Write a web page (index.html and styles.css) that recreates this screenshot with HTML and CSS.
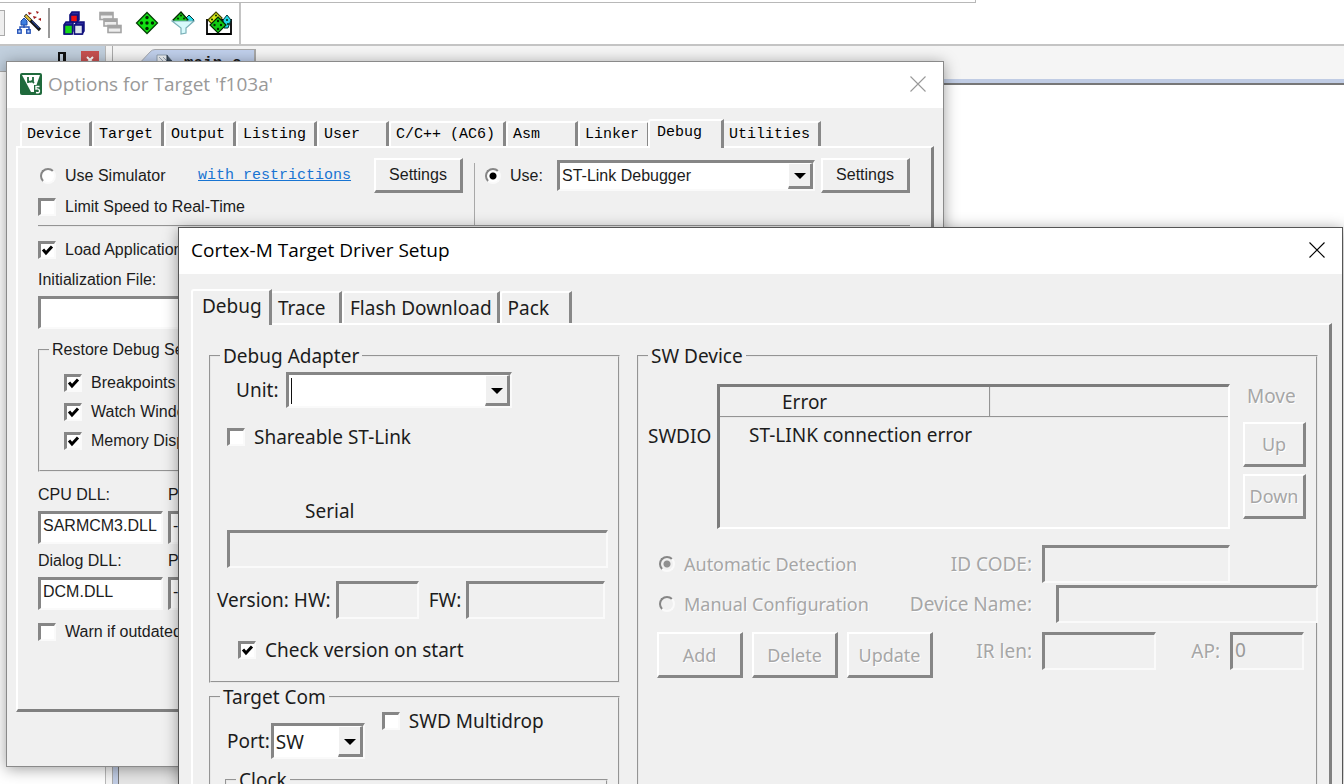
FILE: index.html
```html
<!DOCTYPE html>
<html lang="en">
<head>
<meta charset="utf-8">
<title>Options for Target 'f103a'</title>
<link rel="stylesheet" href="styles.css">
</head>
<body>
<div class="app">
  <div class="menu-edge"></div>
  <div class="toolbar">
    <button class="tool-stub" aria-label="Target list"></button>
    <button class="tool wand" aria-label="Options for target">
      <svg width="26" height="26" viewBox="0 0 26 26">
        <path d="M8 14v4M4 20v-3h9v3" fill="none" stroke="#2a56b8" stroke-width="1.5"/>
        <path d="M8 8l3 3v4H5v-4z" fill="#3f7fe0" stroke="#1c4aa8"/>
        <g fill="#bcd6ff" stroke="#2a56b8" stroke-width="1.4"><rect x="1.7" y="19.700" width="3.500" height="3.500"/><rect x="10.700" y="19.700" width="3.500" height="3.500"/></g>
        <path d="M9 5l15 15" stroke="#111" stroke-width="3.200"/><path d="M9.500 5.500l5 5" stroke="#e8c83c" stroke-width="2"/>
        <path d="M16 11l7 7" stroke="#26408c" stroke-width="1.200"/>
        <g fill="#a01818"><path d="M12 2l4 1-3 2zM20 1l3 1-2 2zM17 6l4 1-3 2zM22 9l3-1v3z"/></g>
      </svg>
    </button>
    <span class="tool-sep"></span>
    <button class="tool" aria-label="Manage project items">
      <svg width="24" height="24" viewBox="0 0 24 24" stroke="#10107c" stroke-width="1.500">
        <path d="M7 4l2-3h7v8l-2 2H7z" fill="#2a2aa0"/><rect x="7.500" y="4" width="7" height="7" fill="#f01010"/>
        <path d="M1 14l2-3h7v9l-2 3H1z" fill="#2a2aa0"/><rect x="1.500" y="14" width="8" height="9" fill="#18d818"/>
        <path d="M12 14l2-3h7v9l-2 3h-7z" fill="#2a2aa0"/><rect x="11.500" y="14" width="8" height="9" fill="#dfe6ee"/>
      </svg>
    </button>
    <button class="tool" aria-label="Multi-project workspace">
      <svg width="24" height="24" viewBox="0 0 24 24" fill="#eee" stroke="#a4a4a4" stroke-width="1.600">
        <rect x="1" y="1.500" width="13" height="7"/><path d="M1 3h13" stroke-width="3"/>
        <rect x="5" y="8" width="13" height="7"/><path d="M5 9.500h13" stroke-width="3"/>
        <rect x="9" y="14.500" width="13" height="7"/><path d="M9 16h13" stroke-width="3"/>
      </svg>
    </button>
    <button class="tool" aria-label="Manage run-time environment">
      <svg width="24" height="24" viewBox="0 0 24 24">
        <path d="M12 1.500L22.500 12 12 22.500 1.500 12z" fill="#12e012" stroke="#064006" stroke-width="1.300"/>
        <g fill="#022802"><circle cx="12" cy="6.500" r="1.700"/><circle cx="6.500" cy="12" r="1.700"/><circle cx="12" cy="12" r="1.700"/><circle cx="17.500" cy="12" r="1.700"/><circle cx="12" cy="17.500" r="1.700"/></g>
      </svg>
    </button>
    <button class="tool" aria-label="Select software packs">
      <svg width="24" height="24" viewBox="0 0 24 24">
        <path d="M14 8l4-4 5 5-5 4z" fill="#28dce8" stroke="#033" stroke-width="1"/>
        <path d="M2 9l8-8 7 8-5 4H7z" fill="#16c816" stroke="#032803" stroke-width="1.200"/>
        <g fill="#022802"><circle cx="10" cy="4.500" r="1"/><circle cx="7" cy="7.500" r="1"/><circle cx="13" cy="7.500" r="1"/></g>
        <path d="M1 10h22l-8 7v5l-5 1v-6z" fill="#d8fafc" stroke="#7ab0b8" stroke-width="1.200"/>
      </svg>
    </button>
    <button class="tool" aria-label="Pack installer">
      <svg width="26" height="24" viewBox="0 0 26 24">
        <path d="M1 9h24v14H1z" fill="#fff" stroke="#000" stroke-width="1.800"/>
        <path d="M17 9l4-5 4 5-3 8h-4z" fill="#24d8e8" stroke="#033" stroke-width="1"/>
        <path d="M2 9l8-8 6 6-8 8z" fill="#d8e818" stroke="#440" stroke-width="1.200"/>
        <path d="M12 6l8 8-8 8-8-8z" fill="#12cc12" stroke="#032803" stroke-width="1.200"/>
        <g fill="#022802"><circle cx="12" cy="10" r="1.200"/><circle cx="8.500" cy="14" r="1.200"/><circle cx="15" cy="14" r="1.200"/><circle cx="12" cy="18" r="1.200"/><circle cx="10" cy="4.500" r="1"/><circle cx="6" cy="8.500" r="1"/><circle cx="21" cy="9" r="1"/><circle cx="22" cy="13" r="1"/></g>
      </svg>
    </button>
  </div>
  <div class="workspace">
    <div class="sidebar">
      <div class="sidebar-head">
        <svg width="12" height="18" viewBox="0 0 12 18"><path d="M3 12V2h6v10M0 12h12M6 12v6" fill="none" stroke="#111" stroke-width="2"/><path d="M8 2v10" stroke="#111" stroke-width="2"/></svg>
        <button class="panel-close" aria-label="Close panel"><svg width="8" height="8" viewBox="0 0 8 8"><path d="M1 1l6 6M7 1L1 7" stroke="#fff" stroke-width="2"/></svg></button>
      </div>
      <div class="sidebar-body"></div>
    </div>
    <div class="editor">
      <div class="editor-tabs">
        <div class="file-tab">
          <svg class="tab-slope" width="18" height="30" viewBox="0 0 18 30"><path d="M0 17L13 3q2-2.500 5-2.500V30H0z" fill="#c0d0ec"/><path d="M0 17H0V0h13z" fill="#f5f5f5"/><path d="M0 17L13 3q2-2.500 5-2.500" fill="none" stroke="#a4a8b0"/></svg>
          <span class="tab-body"><svg width="18" height="24" viewBox="0 0 18 24"><path d="M1 1h10l5 6v16H1z" fill="#eef2f6" stroke="#90a0b0"/><path d="M3 3l8 8M3 7l8 8M7 3l6 6" stroke="#9ab" stroke-width="1"/><path d="M11 1v6h5" fill="#456" stroke="#234"/></svg>main.c</span>
        </div>
      </div>
      <div class="editor-body"><div class="gutter"></div></div>
    </div>
  </div>

  <section class="dialog options" aria-label="Options for Target 'f103a'">
    <header class="titlebar inactive">
      <svg width="22" height="22" viewBox="0 0 22 22"><rect width="22" height="22" rx="2" fill="#1f6a3c"/><path d="M2 2h18l-6 17h-3z" fill="#fff"/><path d="M8 4v6M8 8q3 2 5-1M13 4v5l1 1" fill="none" stroke="#1f6a3c" stroke-width="1.800"/><path d="M14 12h7v9h-7z" fill="#1f6a3c"/><path d="M19.500 13.500H16v2.500q3.500-.5 3.500 2T16 19.500" fill="none" stroke="#fff" stroke-width="1.400"/></svg>
      <h1>Options for Target 'f103a'</h1>
      <button class="close" aria-label="Close"><svg width="16" height="16" viewBox="0 0 16 16"><path d="M.5.5l15 15M15.500.5l-15 15" stroke="currentColor" stroke-width="1.100"/></svg></button>
    </header>
    <div class="tabs mono" role="tablist">
      <button role="tab">Device</button><button role="tab">Target</button><button role="tab">Output</button><button role="tab">Listing</button><button role="tab">User</button><button role="tab">C/C++ (AC6)</button><button role="tab">Asm</button><button role="tab">Linker</button><button role="tab" class="active" aria-selected="true">Debug</button><button role="tab">Utilities</button>
    </div>
    <div class="page">
      <div class="drivers">
        <div class="driver-left">
          <div class="row">
            <label class="opt"><input type="radio" name="driver">Use Simulator</label>
            <a class="mono" href="#restrictions">with restrictions</a>
            <button class="btn settings">Settings</button>
          </div>
          <label class="opt"><input type="checkbox">Limit Speed to Real-Time</label>
        </div>
        <div class="driver-right">
          <div class="row">
            <label class="opt"><input type="radio" name="driver" checked>Use:</label>
            <span class="combo"><select aria-label="Debugger"><option>ST-Link Debugger</option></select><i></i></span>
            <button class="btn settings">Settings</button>
          </div>
        </div>
      </div>
      <div class="startup">
        <label class="opt"><input type="checkbox" checked>Load Application</label>
        <label class="caption" for="init">Initialization File:</label>
        <input class="field" id="init" type="text">
        <fieldset>
          <legend>Restore Debug Session</legend>
          <div class="restore">
            <label class="opt"><input type="checkbox" checked>Breakpoints</label>
            <label class="opt"><input type="checkbox" checked>Watch Windows</label>
            <label class="opt"><input type="checkbox" checked>Memory Display</label>
          </div>
        </fieldset>
        <div class="dlls">
          <div><label class="caption" for="cpu">CPU DLL:</label><input class="field" id="cpu" type="text" value="SARMCM3.DLL"></div>
          <div><label class="caption" for="cpup">Parameter:</label><input class="field" id="cpup" type="text" value="-REMAP"></div>
          <div><label class="caption" for="dlg">Dialog DLL:</label><input class="field" id="dlg" type="text" value="DCM.DLL"></div>
          <div><label class="caption" for="dlgp">Parameter:</label><input class="field" id="dlgp" type="text" value="-pCM3"></div>
        </div>
        <label class="opt warn"><input type="checkbox">Warn if outdated</label>
      </div>
    </div>
  </section>

  <section class="dialog driver" aria-label="Cortex-M Target Driver Setup">
    <header class="titlebar">
      <h1>Cortex-M Target Driver Setup</h1>
      <button class="close" aria-label="Close"><svg width="16" height="16" viewBox="0 0 16 16"><path d="M.5.5l15 15M15.500.5l-15 15" stroke="currentColor" stroke-width="1.100"/></svg></button>
    </header>
    <div class="tabs" role="tablist">
      <button role="tab" class="active" aria-selected="true">Debug</button><button role="tab">Trace</button><button role="tab">Flash Download</button><button role="tab">Pack</button>
    </div>
    <div class="page">
      <div class="left">
        <fieldset class="adapter">
          <legend>Debug Adapter</legend>
          <div class="row unit"><label for="unit">Unit:</label><span class="combo"><input id="unit" type="text" class="caret" role="combobox" aria-expanded="false"><i></i></span></div>
          <label class="opt share"><input type="checkbox">Shareable ST-Link</label>
          <label class="serial" for="serial">Serial</label>
          <input class="field flat" id="serial" type="text" readonly>
          <div class="row version"><label for="hw">Version: HW:</label><input class="field flat hw" id="hw" type="text" readonly><label for="fw">FW:</label><input class="field flat fw" id="fw" type="text" readonly></div>
          <label class="opt check"><input type="checkbox" checked>Check version on start</label>
        </fieldset>
        <fieldset class="com">
          <legend>Target Com</legend>
          <div class="com-row">
            <div class="row port"><label for="port">Port:</label><span class="combo"><select id="port"><option>SW</option></select><i></i></span></div>
            <label class="opt"><input type="checkbox">SWD Multidrop</label>
          </div>
          <fieldset class="clock"><legend>Clock</legend><div class="clock-body"></div></fieldset>
        </fieldset>
      </div>
      <fieldset class="device">
        <legend>SW Device</legend>
        <div class="scan">
          <span class="swdio">SWDIO</span>
          <div class="list">
            <table>
              <thead><tr><th>Error</th><th></th></tr></thead>
              <tbody><tr><td colspan="2">ST-LINK connection error</td></tr></tbody>
            </table>
          </div>
          <div class="move disabled">
            <span>Move</span>
            <button class="btn" disabled>Up</button>
            <button class="btn" disabled>Down</button>
          </div>
        </div>
        <div class="ident disabled">
          <div class="irow"><label class="opt"><input type="radio" name="det" checked disabled>Automatic Detection</label><label class="key" for="id">ID CODE:</label><div class="vals"><input class="field flat idcode" id="id" type="text" disabled></div></div>
          <div class="irow"><label class="opt"><input type="radio" name="det" disabled>Manual Configuration</label><label class="key" for="dn">Device Name:</label><div class="vals"><input class="field flat devname" id="dn" type="text" disabled></div></div>
          <div class="irow last"><div class="acts"><button class="btn" disabled>Add</button><button class="btn" disabled>Delete</button><button class="btn" disabled>Update</button></div><label class="key" for="ir">IR len:</label><div class="vals"><input class="field flat irlen" id="ir" type="text" disabled><label class="ap-key" for="ap">AP:</label><input class="field flat ap" id="ap" type="text" value="0" disabled></div></div>
        </div>
      </fieldset>
    </div>
  </section>
</div>
</body>
</html>
```

FILE: styles.css
```css
* { box-sizing: border-box; }
body { margin: 0; overflow: hidden; background: #fff; color: #1c1c1c; }
button, input, select { font: inherit; color: inherit; margin: 0; border-radius: 0; outline: 0; }
button { background: none; border: 0; padding: 0; }
svg { display: block; flex: none; }
.row { display: flex; align-items: center; }

/* main window */
.app { position: relative; height: 100vh; display: flex; flex-direction: column; overflow: hidden; }
.menu-edge { flex: none; width: 976px; height: 3px; border: solid #b8b8b8; border-width: 0 1px 1px 0; }
.toolbar { flex: none; width: 241px; height: 41px; display: flex; align-items: center; border-right: 2px solid #c4c4c4; padding-bottom: 2px; }
.tool-stub { width: 5px; height: 26px; border: 1px solid #aaa; border-left: 0; background: #eee; }
.tool { width: 36px; display: flex; justify-content: center; }
.tool.wand { width: 43px; padding-left: 4px; }
.tool-sep { width: 2px; height: 30px; background: #999; margin-right: 7px; }
.workspace { flex: 1; display: flex; border-top: 2px solid #c4c4c4; background: #f5f5f5; }
.sidebar { width: 106px; border-right: 1px solid #b8b8b8; background: #fff; display: flex; flex-direction: column; }
.sidebar-head { height: 26px; background: #c1cfdd; display: flex; align-items: flex-start; justify-content: flex-end; gap: 13px; padding: 5px 6px 0 0; border-bottom: 1px solid #aaa; }
.panel-close { width: 18px; height: 18px; background: #c75050; padding: 5px; }
.sidebar-body { flex: 1; }
.editor { flex: 1; margin-left: 6px; border-left: 1px solid #aaa; display: flex; flex-direction: column; }
.editor-tabs { height: 33px; padding: 3px 0 0 24px; overflow: hidden; }
.file-tab { display: flex; font: bold 16px/20px "Liberation Mono", monospace; }
.tab-body { display: flex; gap: 10px; width: 101px; height: 30px; padding: 4px 0 0 1px; background: #c0d0ec; border: solid #a8a8a8; border-width: 1px 2px 0 0; }
.editor-body { flex: 1; background: #fff; border: solid #c0cce4; border-width: 4px 0 0 5px; box-shadow: inset 0 2px #777; display: flex; }
.gutter { width: 72px; background: #e6e6e6; border-left: 1px solid #777; margin-top: 2px; }

/* windows */
.dialog { position: absolute; background: #f0f0f0; border: 1px solid #8a8a8a; box-shadow: 0 2px 14px rgba(0,0,0,.38); }
.options { left: 6px; top: 61px; width: 938px; padding-bottom: 54px; font: 16px/22px "Liberation Sans", Arial, sans-serif; }
.driver { left: 178px; top: 227px; right: 1px; bottom: -2px; border-color: #555; font: 19px/22px "Noto Sans", sans-serif; display: flex; flex-direction: column; }
.titlebar { flex: none; height: 46px; display: flex; align-items: center; gap: 6px; padding: 0 17px 2px 12px; background: #fff; color: #000; }
.titlebar.inactive { color: #999; padding-left: 13px; }
.titlebar h1 { margin: 0; font: 19px/24px "Open Sans", sans-serif; }
.close { margin-left: auto; }

.tabs { display: flex; flex: none; }
.tabs button { text-align: left; border: solid; border-color: #fff #888 #f0f0f0 #fff; border-width: 2px 3px 0 2px; border-top-left-radius: 3px; min-width: 72px; white-space: nowrap; }
.tabs .active { position: relative; z-index: 1; background: #f0f0f0; }
.mono { font: 15px/20px "Liberation Mono", monospace; }
.options .tabs { padding: 13px 0 0 13px; color: #000; }
.options .tabs button { height: 25px; padding: 0 8px 0 5px; }
.options .tabs .active { margin: -2px -2px -2px; height: 29px; min-width: 76px; padding: 0 8px 4px 7px; }
.driver .tabs { padding: 17px 0 0 14px; }
.driver .tabs button { height: 32px; padding: 0 5px 0 6px; }
.driver .tabs .active { margin: -2px -2px -2px; height: 36px; min-width: 81px; padding: 0 5px 5px 9px; }
.page { border: solid; border-color: #fff #808080 #808080 #fff; border-width: 2px 3px 3px 2px; }
.options .page { margin: 0 9px; padding: 10px 21px 66px 20px; }

/* controls */
.btn { border: solid; border-color: #fff #868686 #868686 #fff; border-width: 2px 3px 3px 2px; background: #f0f0f0; }
.field { display: block; background: #fff; border: solid; border-color: #868686 #fafafa #fafafa #868686; border-width: 3px 2px 2px 3px; padding: 0 2px; height: 33px; width: 100%; }
.flat { background: #f0f0f0; height: 38px; }
.opt { display: flex; align-items: center; gap: 9px; height: 22px; white-space: nowrap; }
.opt input { appearance: none; flex: none; width: 18px; height: 18px; background: #fff; border: solid; border-color: #868686 #fafafa #fafafa #868686; border-width: 3px 2px 2px 3px; }
.opt input[type=radio] { width: 16px; height: 16px; margin: 0 0 0 2px; border-width: 2px; border-radius: 50%; }
.opt input[type=checkbox]:checked { background: #fff url("data:image/svg+xml,%3Csvg xmlns='http://www.w3.org/2000/svg' viewBox='0 0 13 13'%3E%3Cpath d='M2 5.500L5 9l6-6.500' fill='none' stroke='black' stroke-width='3'/%3E%3C/svg%3E") center / 13px 13px no-repeat; }
.opt input[type=radio]:checked { background: radial-gradient(circle, #000 3px, #fff 4px); }
.opt input[type=radio]:disabled { background: #f0f0f0; }
.opt input[type=radio]:checked:disabled { background: radial-gradient(circle, #909090 3px, #f0f0f0 4px); }
.combo { position: relative; display: block; height: 36px; border: solid; border-color: #868686 #fafafa #fafafa #868686; border-width: 3px 2px 2px 3px; background: #fff; }
.combo select, .combo input { appearance: none; display: block; width: 100%; height: 100%; border: 0; background: none; padding: 0 28px 0 2px; }
.combo i { position: absolute; top: 0; right: 0; bottom: 0; width: 25px; pointer-events: none; border: solid; border-color: #fff #868686 #868686 #fff; border-width: 1px 3px 3px 1px; background: #f0f0f0; }
.combo i::after { content: ""; position: absolute; left: 5px; top: 50%; margin-top: -2px; border: solid transparent; border-width: 6px 6px 0; border-top-color: #000; }
.combo .caret { background: linear-gradient(#111, #111) 2px center / 1px 26px no-repeat; }
fieldset { margin: 0; padding: 0; min-width: 0; border: 2px groove #e8e8e8; }
legend { margin-left: 9px; padding: 0 3px; line-height: 22px; }
.disabled, .disabled .btn { color: #a6a6a6; text-shadow: 1px 1px #fff; }

/* options dialog */
.drivers { display: grid; grid-template-columns: 436px 1fr; height: 69px; border-bottom: 2px groove #e8e8e8; }
.driver-left { padding-right: 11px; }
.driver-left .row .opt { width: 160px; }
.driver-left .row .settings { margin-left: auto; }
.driver-left > .opt { margin-top: 3px; }
.driver-left a { color: #1874d2; }
.driver-right { padding-left: 9px; background: linear-gradient(#a8a8a8, #a8a8a8) 0 5px / 1px 100% no-repeat; }
.driver-right .opt { width: 74px; }
.driver-right .combo { flex: 1; height: 31px; margin-right: 6px; }
.settings { width: 89px; height: 35px; }
.startup { width: 440px; padding-top: 12px; }
.caption { display: block; line-height: 20px; }
.startup > .caption { margin: 9px 0 6px; }
.startup fieldset { margin-top: 10px; height: 133px; }
.restore { padding: 7px 0 0 24px; }
.restore .opt { height: 29px; }
.dlls { display: grid; grid-template-columns: 125px 1fr; gap: 7px 5px; margin-top: 13px; }
.dlls .caption { margin-bottom: 6px; }
.dlls .field { padding-bottom: 4px; }
.warn { margin-top: 11px; }

/* driver setup dialog */
.driver .page { flex: 1; margin: 0 10px 0 12px; padding: 20px 11px 0 16px; border-bottom: 0; display: grid; grid-template-columns: 411px 1fr; gap: 17px; }
.left { display: flex; flex-direction: column; gap: 3px; }
.adapter { height: 338px; padding: 5px 10px 0 6px; }
.adapter > legend { margin-left: 3px; }
.unit { padding-left: 19px; gap: 8px; }
.unit .combo { width: 226px; }
.share { margin: 18px 0 0 10px; }
.serial { display: block; margin: 52px 0 8px 88px; }
#serial { width: 381px; margin-left: 10px; }
.version { margin-top: 13px; white-space: nowrap; gap: 5px; }
.hw { width: 83px; margin-right: 5px; }
.fw { width: 139px; }
.check { margin: 20px 0 0 21px; }
.com { flex: 1; }
.com-row { display: flex; gap: 17px; padding: 2px 0 0 16px; }
.port { gap: 1px; padding-top: 13px; }
.port .combo { width: 94px; }
.clock { margin: 10px 10px 0 14px; }
.clock-body { height: 80px; }
.device { padding: 17px 10px 0 9px; }
.device > legend { margin-left: 0; }
.scan { display: flex; }
.swdio { width: 69px; padding-top: 41px; }
.list { flex: 1; height: 145px; border: solid; border-color: #7c7c7c #fff #fff #7c7c7c; border-width: 3px 2px 2px 3px; }
.list table { width: 100%; border-collapse: collapse; table-layout: fixed; }
.list th { height: 30px; padding: 0; font-weight: normal; text-align: left; border-bottom: 2px groove #e8e8e8; }
.list th:first-child { width: 270px; padding-left: 62px; border-right: 2px groove #e8e8e8; }
.list td { padding: 0 0 0 29px; height: 34px; }
.move { width: 63px; margin-left: 13px; display: flex; flex-direction: column; gap: 7px; }
.move span { line-height: 24px; padding: 0 0 7px 4px; }
.ident .opt, .disabled .btn { font-size: 18px; }
.move .btn { height: 45px; }
.ident { display: flex; flex-direction: column; gap: 2px; padding: 16px 0 0 9px; }
.irow { display: flex; align-items: center; }
.irow.last { margin-top: 7px; align-items: flex-start; }
.last .key { line-height: 38px; }
.key { flex: 1; text-align: right; padding-right: 10px; white-space: nowrap; }
.vals { flex: none; width: 264px; padding-right: 2px; display: flex; align-items: center; }
.idcode { width: 188px; }
.devname { width: auto; min-width: 0; flex: 1; margin: 0 -14px 0 14px; position: relative; }
.irlen { width: 114px; }
.ap-key { flex: 1; text-align: right; padding-right: 10px; }
.ap { width: 74px; padding-bottom: 4px; color: #999; }
.acts { display: flex; gap: 9px; }
.acts .btn { width: 86px; height: 46px; }
```
